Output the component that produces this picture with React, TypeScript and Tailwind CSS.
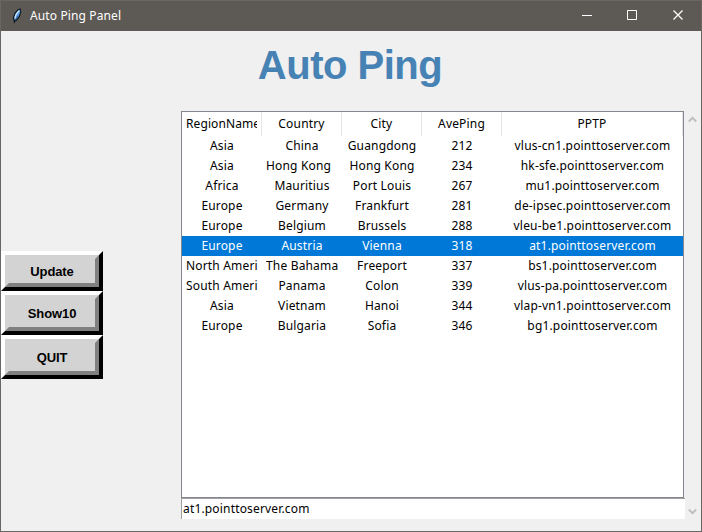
const columns = ["RegionName", "Country", "City", "AvePing", "PPTP"];

const rows = [
  ["Asia", "China", "Guangdong", "212", "vlus-cn1.pointtoserver.com"],
  ["Asia", "Hong Kong", "Hong Kong", "234", "hk-sfe.pointtoserver.com"],
  ["Africa", "Mauritius", "Port Louis", "267", "mu1.pointtoserver.com"],
  ["Europe", "Germany", "Frankfurt", "281", "de-ipsec.pointtoserver.com"],
  ["Europe", "Belgium", "Brussels", "288", "vleu-be1.pointtoserver.com"],
  ["Europe", "Austria", "Vienna", "318", "at1.pointtoserver.com"],
  ["North Ameri", "The Bahama", "Freeport", "337", "bs1.pointtoserver.com"],
  ["South Ameri", "Panama", "Colon", "339", "vlus-pa.pointtoserver.com"],
  ["Asia", "Vietnam", "Hanoi", "344", "vlap-vn1.pointtoserver.com"],
  ["Europe", "Bulgaria", "Sofia", "346", "bg1.pointtoserver.com"],
];

const selected = 5;
const grid = "grid grid-cols-[80px_80px_80px_80px_181px]";
const longTexts = ["RegionName", "North Ameri", "South Ameri", "The Bahama"];

function Cell({ text, left = false }: { text: string; left?: boolean }) {
  return (
    <div className={`mx-1 overflow-hidden whitespace-nowrap ${left || longTexts.includes(text) ? "text-left" : "text-center"}`}>
      {text}
    </div>
  );
}

function BevelButton({ label, height }: { label: string; height: string }) {
  return (
    <button className={`block w-[102px] border-4 border-t-white border-l-white border-r-black border-b-black ${height}`}>
      <span className="flex h-full items-center justify-center border-4 border-t-[#d3d3d3] border-l-[#d3d3d3] border-r-[#808080] border-b-[#808080] bg-[#d3d3d3] pt-px font-['Liberation_Sans',sans-serif] text-[13px] font-bold leading-4 tracking-[-0.1px] text-black">
        {label}
      </span>
    </button>
  );
}

function Feather() {
  return (
    <svg width="10" height="17" viewBox="0 0 10 17" className="block">
      <path d="M2 16 1.5 12.5 .8 10 2.5 5 5.5 1.5 8.8.3 9.2 4 7.8 9 4.5 13 3.2 13.5Z" fill="#101820" />
      <path d="M2.6 12 2.4 9 4 5 6.5 2.4 8.2 1.6 8 4.5 6.6 8.6 4 11.8Z" fill="#5b9fe8" />
      <path d="M2.8 10.5 4 6.5 7 2.6" fill="none" stroke="#cbe6fb" strokeWidth="1.3" />
      <path d="M3.2 12.5 6 7.5" fill="none" stroke="#1c4370" strokeWidth=".7" />
    </svg>
  );
}

export default function App() {
  return (
    <div className="flex h-[532px] w-[702px] flex-col overflow-hidden border border-[#696663] bg-[#f0f0f0] font-['Noto_Sans','Noto_Sans_CJK_SC',sans-serif] text-[12px] text-black">
      <header className="flex h-[30px] shrink-0 items-center bg-[#5d5954] text-white">
        <div className="ml-[11px] w-[18px]"><Feather /></div>
        <span className="grow text-[12px] tracking-[0.12px]">Auto Ping Panel</span>
        <svg width="138" height="30" viewBox="0 0 138 30" fill="none" stroke="white" strokeWidth="1">
          <path d="M19 14.5h10M64.5 9.5h9v9h-9z" />
          <path d="m110.5 9.5 9 9M119.5 9.5l-9 9" strokeWidth="1.3" />
        </svg>
      </header>
      <h1 className="h-[80px] shrink-0 pt-[11px] pr-[2px] text-center font-['Liberation_Sans',sans-serif] text-[40px] font-bold leading-[46px] tracking-[-0.5px] text-[#4682b4]">
        Auto Ping
      </h1>
      <main className="flex">
        <aside className="w-[180px] pt-[140px]">
          <BevelButton label="Update" height="h-10" />
          <BevelButton label="Show10" height="h-11" />
          <BevelButton label="QUIT" height="h-11" />
        </aside>
        <section className="w-[504px] tracking-[0.17px]">
          <div className="h-[387px] w-[503px] border border-[#828790] bg-white">
            <div className={`${grid} h-6 leading-6`}>
              {columns.map((c) => (
                <div key={c} className={`border-r border-[#e5e5e5] ${c === "RegionName" ? "tracking-[0.1px]" : ""}`}><Cell text={c} /></div>
              ))}
            </div>
            {rows.map((r, ri) => (
              <div key={r[4]} className={`${grid} h-5 leading-5 ${ri === selected ? "bg-[#0078d7] text-white" : ""}`}>
                {r.map((t, i) => <Cell key={i} text={t} left={ri === 1 && i === 1} />)}
              </div>
            ))}
          </div>
          <div className="h-[21px] border-t border-l border-t-[#a0a0a0] border-l-[#a0a0a0] bg-white pl-[1px] leading-5">
            at1.pointtoserver.com
          </div>
        </section>
        <div className="flex h-[408px] w-4 flex-col items-center justify-between pt-[5px] pr-px pb-[4px]">
          <svg width="9" height="7" viewBox="0 0 9 7" fill="none" stroke="#bfbfbf" strokeWidth="2"><path d="M.8 5.5 4.5 1.8l3.7 3.7" /></svg>
          <svg width="9" height="7" viewBox="0 0 9 7" fill="none" stroke="#bfbfbf" strokeWidth="2"><path d="M.8 1.5 4.5 5.2l3.7-3.7" /></svg>
        </div>
      </main>
    </div>
  );
}
